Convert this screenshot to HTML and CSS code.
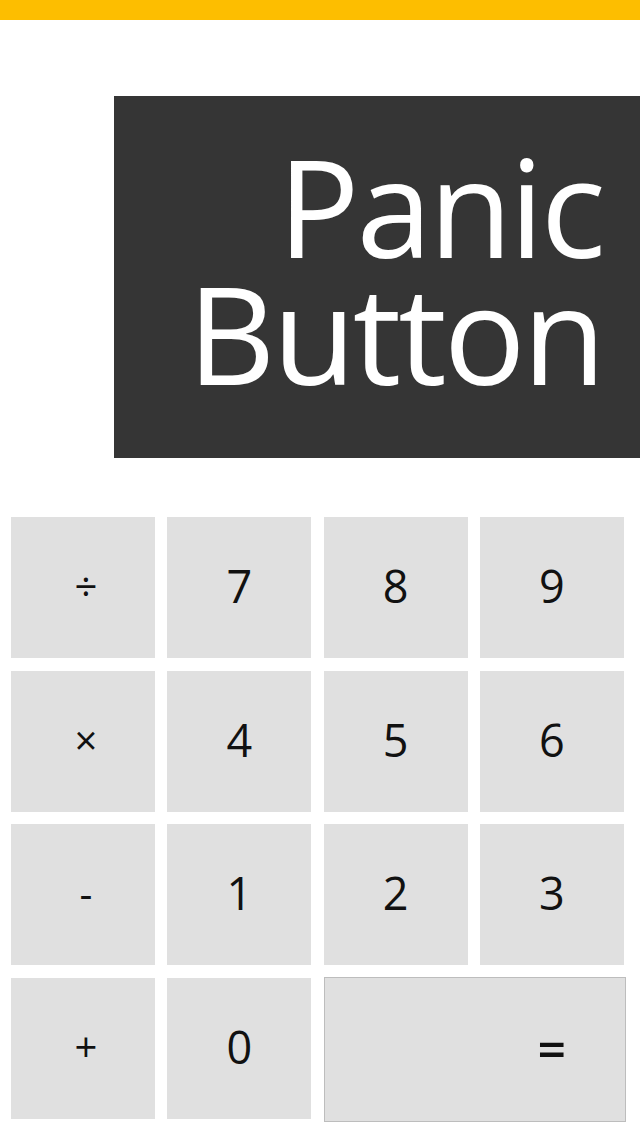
FILE: index.html
```html
<!DOCTYPE html>
<html lang="en">
<head>
<meta charset="utf-8">
<title>Panic Button</title>
<link rel="stylesheet" href="styles.css">
</head>
<body>
<div class="topbar"></div>
<main class="page">
  <section class="title-box">
    <h1 class="title"><span>Panic</span><span>Button</span></h1>
  </section>
  <section class="keypad">
    <button class="key op">÷</button>
    <button class="key">7</button>
    <button class="key">8</button>
    <button class="key">9</button>
    <button class="key op">×</button>
    <button class="key">4</button>
    <button class="key">5</button>
    <button class="key">6</button>
    <button class="key op">-</button>
    <button class="key">1</button>
    <button class="key">2</button>
    <button class="key">3</button>
    <button class="key op">+</button>
    <button class="key">0</button>
    <button class="key equals">=</button>
  </section>
</main>
</body>
</html>
```

FILE: styles.css
```css
html, body {
  margin: 0;
  padding: 0;
  background: #ffffff;
}

body {
  width: 640px;
  height: 1136px;
  overflow: hidden;
  font-family: "Open Sans", "Noto Sans", sans-serif;
}

.topbar {
  height: 20px;
  background: #fdbe00;
}

.page {
  display: flex;
  flex-direction: column;
}

.title-box {
  margin-top: 76px;
  margin-left: 114px;
  height: 362px;
  background: #353535;
  box-sizing: border-box;
  padding: 46px 37px 0 0;
}

.title {
  margin: 0;
  display: flex;
  flex-direction: column;
  align-items: flex-end;
  color: #ffffff;
  font-weight: 400;
  font-size: 136px;
  line-height: 127px;
  letter-spacing: -3px;
}

.title span {
  display: block;
}

.keypad {
  margin-top: 59px;
  margin-left: 11px;
  display: grid;
  grid-template-columns: repeat(4, 144px);
  grid-auto-rows: 141px;
  column-gap: 12.33px;
  row-gap: 12.5px;
}

.key {
  margin: 0;
  padding: 0 0 4px 0;
  border: none;
  background: #e0e0e0;
  color: #111111;
  font-family: "Open Sans", "Noto Sans", sans-serif;
  font-size: 45px;
  font-weight: 400;
  display: flex;
  align-items: center;
  justify-content: center;
}

.key.op {
  font-size: 40px;
  padding-left: 6px;
}

.equals {
  grid-column: span 2;
  border: 1px solid #bdbdbd;
  margin-top: -1px;
  margin-bottom: -3px;
  margin-right: -2px;
  justify-content: flex-end;
  padding: 0 59px 0 0;
  font-size: 50px;
  font-weight: 600;
}
```
